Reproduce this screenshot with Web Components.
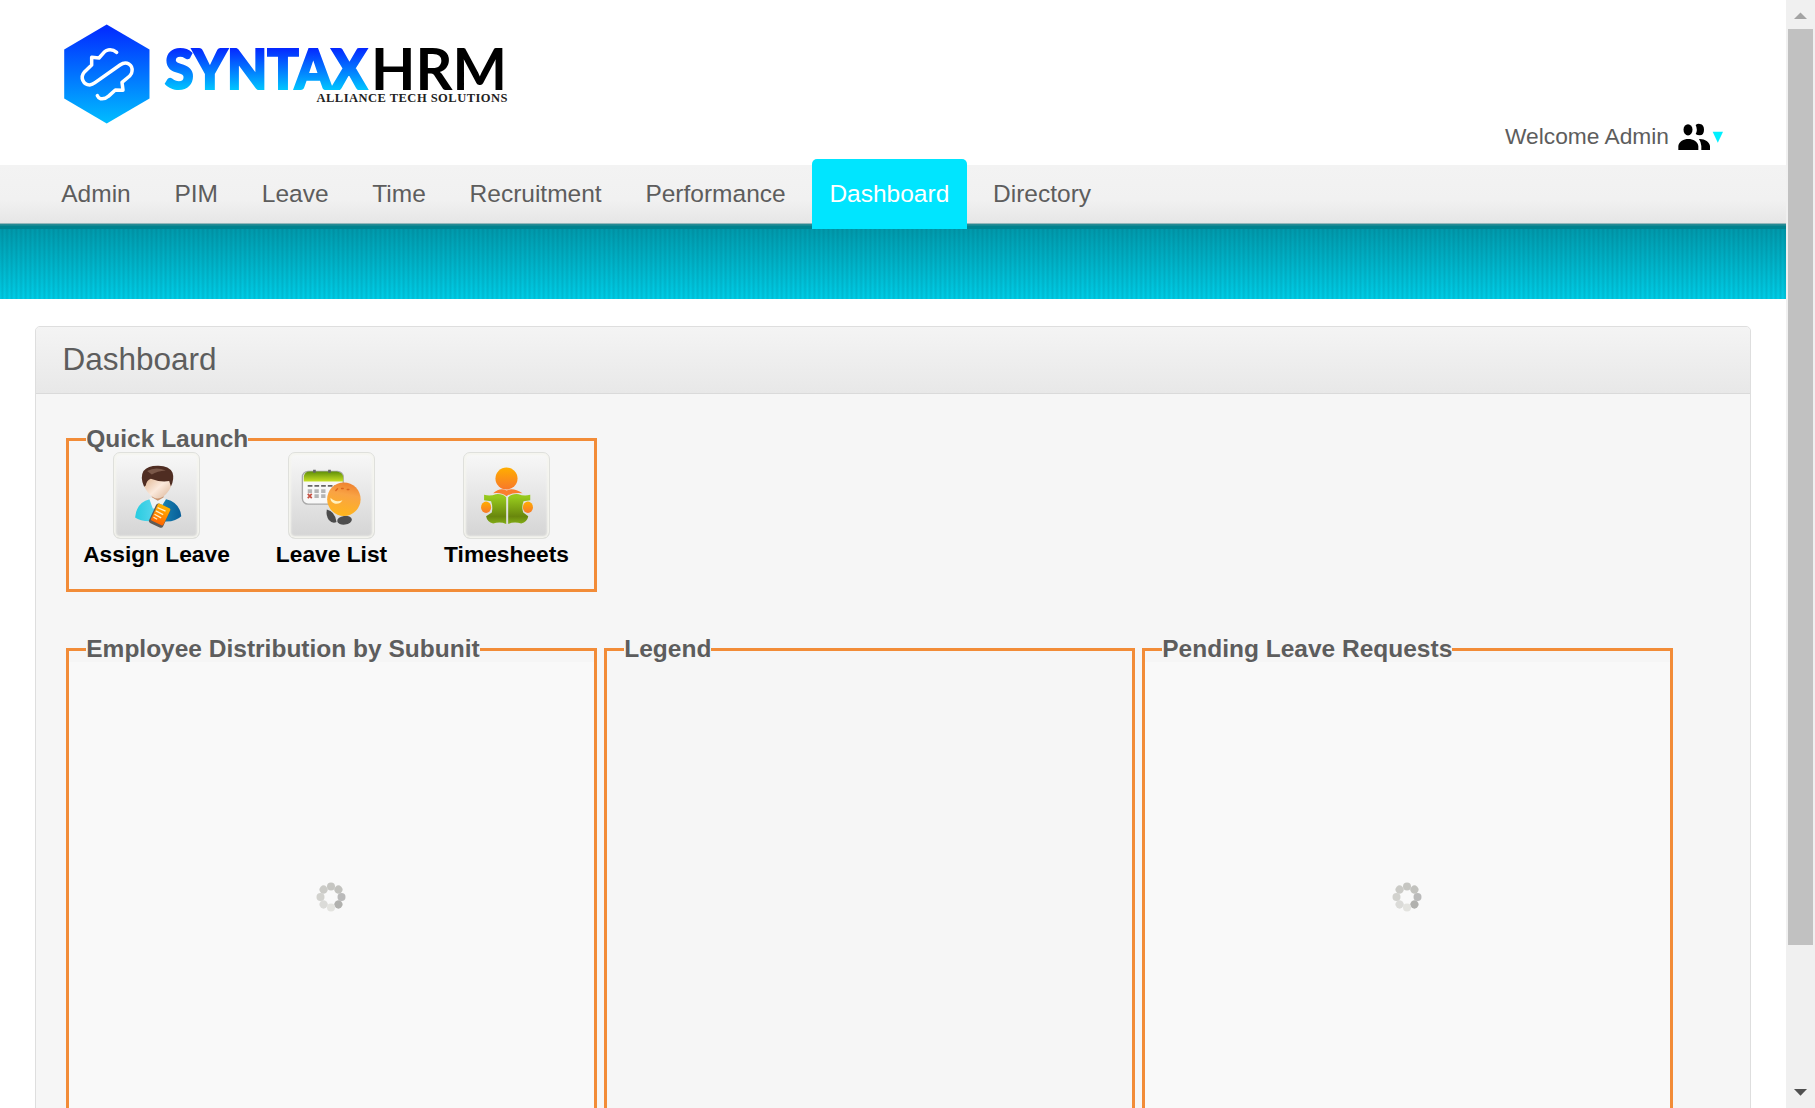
<!DOCTYPE html>
<html lang="en"><head><meta charset="utf-8"><title>SyntaxHRM</title>
<style>
html,body{margin:0;height:100%;overflow:hidden;background:#fff}
body{font-family:"Liberation Sans",Arial,sans-serif;color:#5d5d5d;display:flex}
main{flex:1;min-width:0;height:1108px;overflow:hidden}
.row{display:flex;gap:7px}
</style></head><body>
<main>
<hrm-header><span>Welcome Admin</span></hrm-header>
<hrm-nav>
<hrm-tab>Admin</hrm-tab><hrm-tab>PIM</hrm-tab><hrm-tab>Leave</hrm-tab><hrm-tab>Time</hrm-tab><hrm-tab>Recruitment</hrm-tab><hrm-tab>Performance</hrm-tab><hrm-tab active>Dashboard</hrm-tab><hrm-tab>Directory</hrm-tab>
</hrm-nav>
<hrm-panel><span slot="title">Dashboard</span>
<hrm-box style="height:167px"><span slot="legend">Quick Launch</span>
<hrm-launch>
<hrm-shortcut icon="assign">Assign Leave</hrm-shortcut><hrm-shortcut icon="list">Leave List</hrm-shortcut><hrm-shortcut icon="time">Timesheets</hrm-shortcut>
</hrm-launch></hrm-box>
<div class="row">
<hrm-box style="height:600px"><span slot="legend">Employee Distribution by Subunit</span><hrm-loading></hrm-loading></hrm-box>
<hrm-box style="height:600px"><span slot="legend">Legend</span></hrm-box>
<hrm-box style="height:600px"><span slot="legend">Pending Leave Requests</span><hrm-loading></hrm-loading></hrm-box>
</div>
</hrm-panel>
</main>
<hrm-scrollbar></hrm-scrollbar>
<script>
function define(name,html){
  customElements.define(name,class extends HTMLElement{
    constructor(){super();this.attachShadow({mode:'open'}).innerHTML=typeof html==='function'?html(this):html;}
  });
}
define('hrm-logo',`<style>:host{display:block;width:460px;height:110px}svg{display:block}</style>
<svg width="460" height="110" viewBox="60 20 460 110">
<defs><linearGradient id="h" x1="0" y1="0" x2="0" y2="1"><stop offset=".05" stop-color="#022fff"/><stop offset="1" stop-color="#00bdff"/></linearGradient>
<linearGradient id="t" gradientUnits="userSpaceOnUse" x1="0" y1="48" x2="0" y2="90"><stop offset="0" stop-color="#0526ff"/><stop offset="1" stop-color="#00c6ff"/></linearGradient></defs>
<path d="M106.700 24.500L149.500 49.500V98.500L106.700 123.500L64.200 98.500V49.500Z" fill="url(#h)"/>
<g transform="translate(50 10) scale(.33333)" fill="none" stroke="#fff" stroke-width="10.500" stroke-linecap="round" stroke-linejoin="round">
<path d="M200 127Q188 117 174 120Q168 121 162 127L147 144L125 142V165L104 185C88 203 101 225 119 225Q127 224 135 218L210 165C230 151 249 165 246 184Q246 191 239 198L216 217L219 241L196 240L175 259Q166 268 151 266Q145 264 142 257"/></g>
<g font-family="Lato,sans-serif">
<text x="165" y="88.500" font-size="55" font-weight="900" textLength="202" lengthAdjust="spacingAndGlyphs" fill="url(#t)" stroke="url(#t)" stroke-width="2.200">SYNTAX</text>
<text x="371" y="90" font-size="57" font-weight="700" textLength="136" lengthAdjust="spacingAndGlyphs" fill="#000">HRM</text></g>
<text x="316.500" y="102" font-family="'Liberation Serif',serif" font-size="12.500" font-weight="700" textLength="191" lengthAdjust="spacing" fill="#222">ALLIANCE TECH SOLUTIONS</text>
</svg>`);
define('hrm-header',`<style>:host{display:flex;justify-content:space-between;height:165px;box-sizing:border-box;padding:20px 63px 0 60px;font-size:22.75px;line-height:26px}
.user{display:flex;align-items:flex-start;padding-top:103px}.user svg{display:block;margin:.3px 0 0 8px}</style>
<hrm-logo></hrm-logo><div class="user"><slot></slot>
<svg width="46" height="28" viewBox="560 70 138 84"><g fill="#000"><ellipse cx="593" cy="90.500" rx="13.500" ry="17"/><path d="M616 76Q622 71 629 73Q641 75 641 90Q641 107 628 107Q621 107 616 103Q623 91 616 76Z"/><path d="M564 151V139C566 125 580 118 594 118S622 125 624 139V151Z"/><path d="M626 118C643 117 657 126 659 139V151H633V139Q632 127 626 118Z"/></g><path d="M667 96H698L682.500 129Z" fill="#00f0ff"/></svg></div>`);
define('hrm-nav',`<style>:host{display:block}
nav{display:flex;gap:8.750px;align-items:flex-start;height:64px;padding-left:43.750px;background:linear-gradient(#f3f3f3 0,#f1f1f1 35px,#e6e6e6 58px,#93b7bb 58px,#93b7bb 59px,#2d8e98 59px,#14858f 61px,#00838f 61px)}
.band{height:70px;background:repeating-linear-gradient(90deg,rgba(0,60,80,0) 0,rgba(0,60,80,.13) 2.330px,rgba(0,60,80,0) 4.667px),linear-gradient(#009bad,#00cfe8)}</style>
<nav><slot></slot></nav><div class="band"></div>`);
define('hrm-tab',`<style>:host{display:block;box-sizing:border-box;height:70px;margin-top:-6px;padding:21px 17.500px 0;font-size:24.500px;line-height:28px;border-radius:5px 5px 0 0;white-space:nowrap}
:host([active]){background:#00e5ff;color:#fff}</style><slot></slot>`);
define('hrm-panel',`<style>:host{display:block;margin:27px 35px 0;border:1px solid #dedede;border-radius:5px 5px 0 0;background:#f6f6f6}
h1{margin:0;height:67px;box-sizing:border-box;padding:14px 26.500px 0;font-size:31.500px;line-height:36px;font-weight:400;border-bottom:1px solid #dadada;border-radius:4px 4px 0 0;background:linear-gradient(#f4f4f4,#e8e8e8)}
.body{display:flex;flex-direction:column;gap:43px;padding:31px 30px 0}</style>
<h1><slot name="title"></slot></h1><div class="body"><slot></slot></div>`);
define('hrm-box',`<style>:host{display:block;width:531px;flex:none}
fieldset{display:block;height:100%;box-sizing:border-box;margin:0;padding:0;border:3px solid #f28c38;min-width:0}
legend{margin-left:17.250px;padding:0 0 2px;font-size:24.500px;line-height:27px;font-weight:700;white-space:nowrap}</style>
<fieldset><legend><slot name="legend"></slot></legend><slot></slot></fieldset>`);
define('hrm-launch',`<style>:host{display:flex;margin-top:-2px}</style><slot></slot>`);
const art={
assign:`<svg viewBox="160 96 260 260"><defs><linearGradient id="b"><stop offset="0" stop-color="#27cce0"/><stop offset=".4" stop-color="#55d5ec"/><stop offset=".65" stop-color="#167dad"/><stop offset="1" stop-color="#075d98"/></linearGradient><linearGradient id="f" x1="0" y1="0" x2="1" y2="1"><stop offset="0" stop-color="#d9a77d"/><stop offset=".55" stop-color="#fbe9dc"/><stop offset="1" stop-color="#d8b091"/></linearGradient><linearGradient id="o" x1="0" y1="0" x2="0" y2="1"><stop offset="0" stop-color="#ffb400"/><stop offset="1" stop-color="#ff6500"/></linearGradient></defs>
<path d="M226 292Q230 246 270 237L294 245L319 237Q360 247 364 288Q349 303 320 304L270 303Q240 303 226 292Z" fill="url(#b)"/><path d="M268 235L279 229H307L318 238L300 266L279 265Z" fill="#eef3f4"/><path d="M276 221H311V232L294 242L276 231Z" fill="#c99470"/>
<path d="M251 175Q252 158 294 157Q337 158 337 178Q336 202 322 218Q308 235 294 235Q279 235 264 216Q249 199 251 175Z" fill="url(#f)"/><path d="M253 200Q240 172 251 153Q265 136 296 137Q328 137 338 158Q344 177 333 199L328 183Q304 188 273 176Q260 181 258 196Z" fill="#4f2d22"/><path d="M262 153Q286 139 318 151Q292 153 276 163Z" fill="#7b5849"/>
<rect x="-20" y="-31" width="46" height="64" rx="8" transform="translate(297 284) rotate(25)" fill="#5f5b55"/><rect x="-17" y="-31" width="41" height="56" rx="5" transform="translate(298 284) rotate(25)" fill="url(#o)"/><path d="M293 262L317 273M288 272L310 283M284 282L304 293M281 291L292 297" stroke="#ffeec1" stroke-width="4"/></svg>`,
list:`<svg viewBox="685 96 260 260"><defs><linearGradient id="g" x1="0" y1="0" x2="0" y2="1"><stop offset="0" stop-color="#5e8e08"/><stop offset="1" stop-color="#c7e024"/></linearGradient><linearGradient id="s" x1=".6" y1="0" x2=".4" y2="1"><stop offset="0" stop-color="#ee812f"/><stop offset=".35" stop-color="#f9a344"/><stop offset="1" stop-color="#ffb61c"/></linearGradient></defs>
<rect x="728" y="154" width="122" height="98" rx="17" fill="#f8f8f8" stroke="#a8a8a8" stroke-width="4"/><path d="M732 184V170Q734 154 750 154H831Q850 156 850 174V184Z" fill="url(#g)"/><path d="M764 149V158M809 149V158" stroke="#666" stroke-width="8"/><path d="M744 197H846" stroke="#666" stroke-width="5" stroke-dasharray="14 6"/><path d="M744 213H804M764 228H804" stroke="#b5b5b5" stroke-width="11" stroke-dasharray="13 7"/><path d="M744 221L756 234M756 221L744 234" stroke="#c65142" stroke-width="5"/>
<path d="M801 268Q825 273 830 305Q819 312 807 299Q798 287 801 268Z" fill="#4b4b4b"/><ellipse cx="854" cy="300" rx="22" ry="13" fill="#4e4e4e" transform="rotate(-7 854 300)"/><circle cx="852" cy="237" r="50" fill="url(#s)"/><path d="M812 233Q827 249 848 240Q840 253 824 250Q811 246 812 233Z" fill="#fff1bd"/><path d="M828 211l5-5M845 205h5M862 208h5" stroke="#db651c" stroke-width="4" stroke-linecap="round"/></svg>`,
time:`<svg viewBox="430 96 260 260"><defs><linearGradient id="o" x1="0" y1="0" x2="0" y2="1"><stop offset="0" stop-color="#ffae00"/><stop offset="1" stop-color="#f8782a"/></linearGradient><linearGradient id="g" x1="0" y1="0" x2="0" y2="1"><stop offset=".1" stop-color="#96c91d"/><stop offset=".75" stop-color="#69870d"/><stop offset="1" stop-color="#83ae17"/></linearGradient></defs>
<circle cx="560" cy="175" r="33" fill="url(#o)"/><path d="M520 219Q541 201 560 211Q579 201 608 219Q575 216 560 228Q545 216 520 219Z" fill="#fa7e2c"/><path d="M493 224Q512 229 528 222Q548 220 559 231V311Q540 303 520 310Q502 305 499 288L516 277Q520 260 514 243L493 240Z" fill="url(#g)"/><path d="M631 224Q612 229 596 222Q576 220 565 231V311Q584 303 604 310Q622 305 625 288L610 277Q604 260 611 243L631 240Z" fill="url(#g)"/><ellipse cx="499" cy="261" rx="15" ry="17" fill="url(#o)"/><ellipse cx="624" cy="261" rx="15" ry="17" fill="url(#o)"/></svg>`};
define('hrm-shortcut',el=>`<style>:host{display:flex;flex-direction:column;align-items:center;width:175px;color:#000;font-size:22.750px;line-height:26px;font-weight:700;white-space:nowrap}
.tile{box-sizing:border-box;width:87px;height:87px;border:1px solid #dfe0dc;border-radius:7px;background:linear-gradient(#f8f8f8,#d4d4d4);box-shadow:inset 0 0 2px 2px #f5f5ef;margin-bottom:2px}svg{display:block;margin:-1px;width:87px;height:87px}</style>
<div class="tile">${art[el.getAttribute('icon')]}</div><slot></slot>`);
define('hrm-loading',()=>{const c=['#c6c6c2','#c2c2be','#bababa','#b1b1ae','#e3e3df','#dbdbd8','#d2d2ce','#cbcbc7'];
return `<style>:host{display:flex;align-items:center;justify-content:center;box-sizing:border-box;height:470px;margin-top:-2px;padding-right:1px;background:#f9f9f9}svg{display:block}</style><svg width="30" height="30" viewBox="-15 -15 30 30">${c.map((f,i)=>`<circle cx="0" cy="-10.500" r="4" fill="${f}" transform="rotate(${i*45})"/>`).join('')}</svg>`});
define('hrm-scrollbar',`<style>:host{display:flex;flex-direction:column;align-items:center;box-sizing:border-box;width:29px;height:1108px;background:#f0f0f0;flex:none}
svg{display:block;flex:none}.thumb{width:25px;height:916px;background:#c1c1c1}.space{flex:1}</style>
<svg width="29" height="29"><path d="M8 19H21L14.500 12.500Z" fill="#a3a3a3"/></svg><div class="thumb"></div><div class="space"></div><svg width="29" height="29"><path d="M8 10H21L14.500 16.800Z" fill="#505050"/></svg>`);
</script>
</body></html>
